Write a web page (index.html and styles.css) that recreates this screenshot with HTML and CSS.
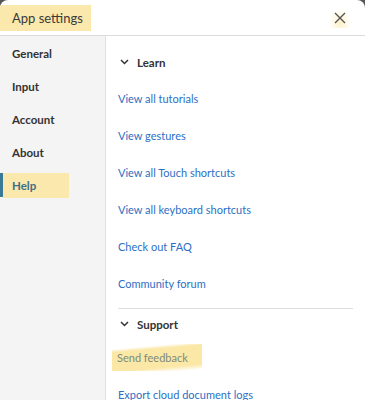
FILE: index.html
```html
<!DOCTYPE html>
<html lang="en">
<head>
    <meta charset="UTF-8">
    <meta name="viewport" content="width=device-width, initial-scale=1.0">
    <title>App settings</title>
    <link rel="stylesheet" href="styles.css">
</head>
<body>
    <div class="dialog">
        <div class="header">
            <span class="title mark">App settings</span>
            <button class="close" aria-label="Close">
                <svg width="12" height="12" viewBox="0 0 12 12"><path d="M1 1L11 11M11 1L1 11" stroke="#555" stroke-width="1.4" fill="none"/></svg>
            </button>
        </div>
        <div class="body">
            <nav class="sidebar">
                <a class="nav-item">General</a>
                <a class="nav-item">Input</a>
                <a class="nav-item">Account</a>
                <a class="nav-item">About</a>
                <a class="nav-item active"><span class="mark">Help</span></a>
            </nav>
            <main class="content">
                <section class="group">
                    <div class="group-title">
                        <svg width="9" height="6" viewBox="0 0 9 6"><path d="M1 1L4.5 4.5L8 1" stroke="#333" stroke-width="1.5" fill="none"/></svg>
                        Learn
                    </div>
                    <a class="link">View all tutorials</a>
                    <a class="link">View gestures</a>
                    <a class="link">View all Touch shortcuts</a>
                    <a class="link">View all keyboard shortcuts</a>
                    <a class="link">Check out FAQ</a>
                    <a class="link">Community forum</a>
                </section>
                <section class="group divided">
                    <div class="group-title">
                        <svg width="9" height="6" viewBox="0 0 9 6"><path d="M1 1L4.5 4.5L8 1" stroke="#333" stroke-width="1.5" fill="none"/></svg>
                        Support
                    </div>
                    <a class="link feedback"><span class="brush">Send feedback</span></a>
                    <a class="link">Export cloud document logs</a>
                </section>
            </main>
        </div>
    </div>
</body>
</html>
```

FILE: styles.css
```css
body {
    margin: 0;
    background: #555;
    font-family: Lato, "Open Sans", sans-serif;
    color: #2c2c2c;
}

.dialog {
    width: 365px;
    height: 400px;
    background: #fff;
    border-radius: 8px 8px 0 0;
    overflow: hidden;
    display: flex;
    flex-direction: column;
}

.header {
    height: 36px;
    flex-shrink: 0;
    border-bottom: 1px solid #dcdcdc;
    display: flex;
    align-items: center;
    justify-content: space-between;
    box-sizing: border-box;
    padding-right: 14px;
}

.title {
    font-size: 13px;
    color: #3a3a3a;
    padding: 5px 8px 5px 12px;
}

.mark {
    background: #fbe8ad;
}

.close {
    border: none;
    background: radial-gradient(ellipse at 50% 75%, #fdf0c8 0%, rgba(255, 255, 255, 0) 70%);
    padding: 4px;
    width: 22px;
    height: 20px;
    display: flex;
    align-items: center;
    justify-content: center;
}

.body {
    flex: 1;
    display: flex;
}

.sidebar {
    width: 105px;
    flex-shrink: 0;
    background: #f4f4f4;
    border-right: 1px solid #e0e0e0;
    display: flex;
    flex-direction: column;
    padding-top: 1px;
}

.nav-item {
    font-size: 11.5px;
    font-weight: 700;
    color: #333;
    height: 33px;
    display: flex;
    align-items: center;
    padding-left: 12px;
    border-left: 3px solid transparent;
    margin-left: -3px;
}

.nav-item.active {
    border-left-color: #3b7a96;
    margin-left: 0;
    padding-left: 0;
    height: 24px;
    margin-top: 4px;
}

.nav-item.active .mark {
    color: #3f6f86;
    padding: 6px 33px 6px 9px;
}

.content {
    flex: 1;
    padding: 0 12px 0 12px;
}

.group {
    display: flex;
    flex-direction: column;
}

.group:first-child {
    padding-bottom: 6px;
}

.divided {
    border-top: 1px solid #dedede;
}

.group-title {
    font-size: 11.5px;
    font-weight: 700;
    color: #333;
    height: 44px;
    padding-top: 8px;
    box-sizing: border-box;
    display: flex;
    align-items: center;
    gap: 8px;
    padding-left: 2px;
}

.divided .group-title {
    padding-top: 0;
    height: 30px;
}

.link {
    font-size: 11px;
    color: #2c6fc4;
    height: 37px;
    display: flex;
    align-items: center;
}

.feedback {
    color: #7d8b7d;
}

.brush {
    background: linear-gradient(175deg, rgba(255, 255, 255, 0) 15%, #fbe7a6 25%, #fbe7a6 80%, rgba(255, 255, 255, 0) 95%);
    padding: 7px 14px 7px 5px;
    margin-left: -6px;
}
```
